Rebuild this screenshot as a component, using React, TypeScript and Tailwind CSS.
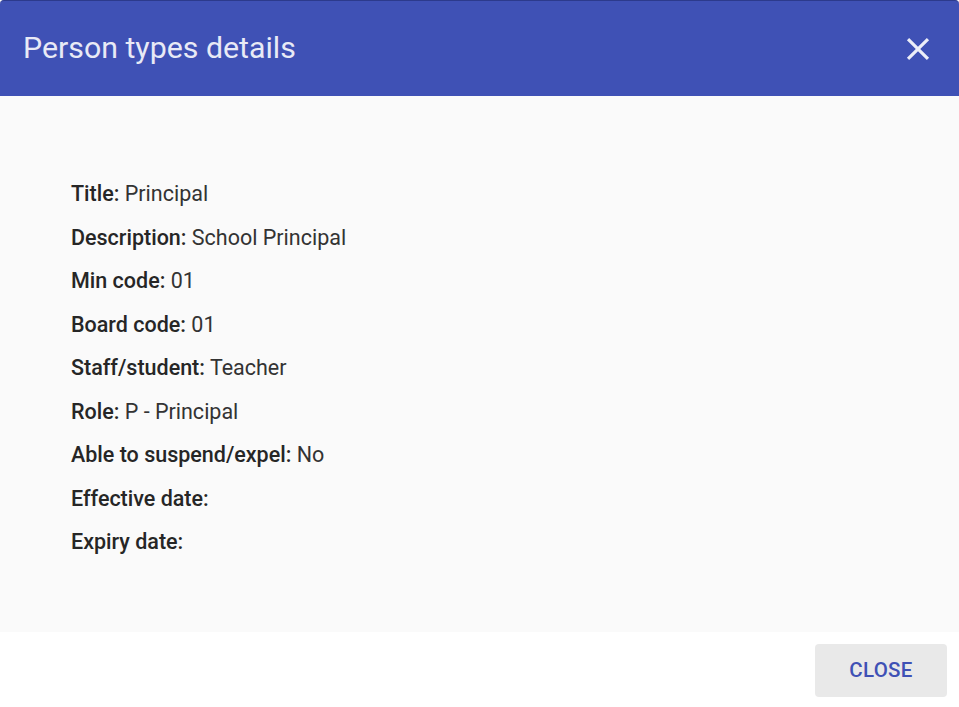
const rows: [string, string][] = [
  ['Title:', 'Principal'],
  ['Description:', 'School Principal'],
  ['Min code:', '01'],
  ['Board code:', '01'],
  ['Staff/student:', 'Teacher'],
  ['Role:', 'P - Principal'],
  ['Able to suspend/expel:', 'No'],
  ['Effective date:', ''],
  ['Expiry date:', ''],
];

export default function App() {
  return (
    <div className="w-[959px] h-[707px] flex flex-col bg-white font-['Roboto',sans-serif]">
      {/* Header */}
      <div className="h-[96px] shrink-0 bg-[#3f51b5] border-t border-[#2c3a8c] rounded-t-[4px] flex items-center justify-between pl-[23px] pr-[22px]">
        <h1 className="text-[30.3px] leading-none text-[#e8eaf6] font-normal">Person types details</h1>
        <button className="w-[38px] h-[38px] flex items-center justify-center text-[#eceef8]">
          <svg viewBox="0 0 24 24" className="w-[38px] h-[38px]" fill="currentColor">
            <path d="M19 6.41L17.59 5 12 10.59 6.41 5 5 6.41 10.59 12 5 17.59 6.41 19 12 13.41 17.59 19 19 17.59 13.41 12z" />
          </svg>
        </button>
      </div>

      {/* Body */}
      <div className="flex-1 bg-[#fafafa] pt-[84px] pl-[71px] flex flex-col gap-[15.5px]">
        {rows.map(([label, value]) => (
          <div key={label} className="text-[21.5px] leading-[28px] text-[#2a2a2a]">
            <span className="font-medium text-[#262626]">{label}</span>
            {value && <span className="text-[#333]"> {value}</span>}
          </div>
        ))}
      </div>

      {/* Footer */}
      <div className="h-[75px] shrink-0 bg-white flex items-start justify-end pt-[12px] pr-[12px]">
        <button className="w-[132px] h-[53px] rounded-[4px] bg-[#e9e9e9] text-[#3f51b5] text-[20.5px] font-medium tracking-[0.3px]">
          CLOSE
        </button>
      </div>
    </div>
  );
}
